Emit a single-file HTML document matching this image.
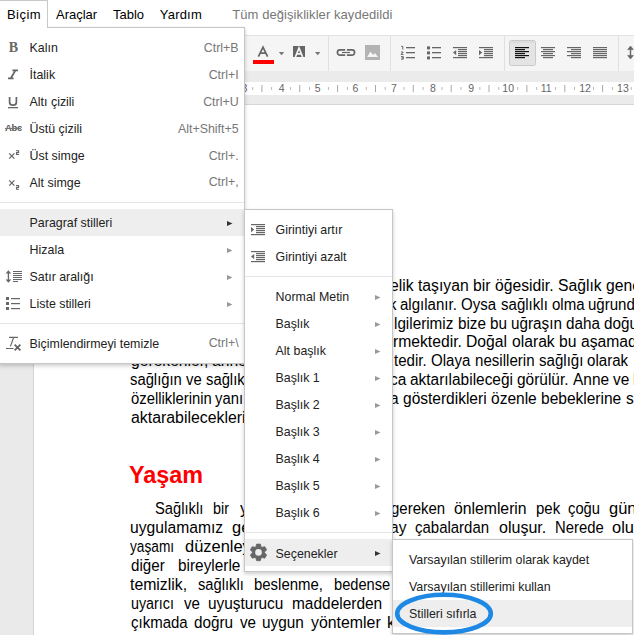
<!DOCTYPE html>
<html><head><meta charset="utf-8">
<style>
*{margin:0;padding:0;box-sizing:border-box}
html,body{width:634px;height:635px;overflow:hidden;background:#fff;position:relative;font-family:"Liberation Sans",sans-serif}
.a{position:absolute;white-space:nowrap}
svg{position:absolute;overflow:visible}
</style></head><body>
<div class="a" style="left:56.00px;top:7.00px;font-size:13px;line-height:16px;color:#000;font-weight:normal;font-family:'Liberation Sans',sans-serif;">Araçlar</div>
<div class="a" style="left:113.00px;top:7.00px;font-size:13px;line-height:16px;color:#000;font-weight:normal;font-family:'Liberation Sans',sans-serif;">Tablo</div>
<div class="a" style="left:159.80px;top:7.00px;font-size:13px;line-height:16px;color:#000;font-weight:normal;font-family:'Liberation Sans',sans-serif;letter-spacing:0.2px">Yardım</div>
<div class="a" style="left:232.30px;top:7.00px;font-size:13px;line-height:16px;color:#777;font-weight:normal;font-family:'Liberation Sans',sans-serif;letter-spacing:0.07px">Tüm değişiklikler kaydedildi</div>
<div class="a" style="left:0px;top:35px;width:634px;height:1px;background:#e2e2e2;"></div>
<div class="a" style="left:0px;top:36px;width:634px;height:35px;background:#f5f5f5;"></div>
<div class="a" style="left:0px;top:71px;width:634px;height:11px;background:#ebebeb;"></div>
<div class="a" style="left:0px;top:82px;width:634px;height:13px;background:#fff;"></div>
<div class="a" style="left:0px;top:95px;width:634px;height:9px;background:#ebebeb;"></div>
<div class="a" style="left:0px;top:104px;width:634px;height:1px;background:#d6d6d6;"></div>
<div class="a" style="left:0px;top:105px;width:33px;height:530px;background:#eaeaea;"></div>
<div class="a" style="left:33px;top:105px;width:1px;height:530px;background:#d4d4d4;"></div>
<div class="a" style="left:328px;top:36px;width:1px;height:35px;background:#e0e0e0;"></div>
<div class="a" style="left:390px;top:36px;width:1px;height:35px;background:#e0e0e0;"></div>
<div class="a" style="left:504px;top:36px;width:1px;height:35px;background:#e0e0e0;"></div>
<div class="a" style="left:618px;top:36px;width:1px;height:35px;background:#e0e0e0;"></div>
<svg style="left:0;top:0;" width="634" height="635"><path d="M258.4 56.6 L263 47.2 L267.6 56.6 M260.2 53.2 H265.8" stroke="#666" stroke-width="1.7" fill="none"/><rect x="253" y="60" width="21" height="4" fill="#ff0000"/><path d="M278.8 52 H284.2 L281.5 55.2 Z" fill="#777"/><path d="M315 52 H320.4 L317.7 55.2 Z" fill="#777"/><rect x="293" y="46" width="12" height="11" fill="#666"/><path d="M295.4 57 L299 48 L302.6 57 M296.8 53.8 H301.2" stroke="#f5f5f5" stroke-width="1.7" fill="none"/><path d="M345.2 49.85 H340 A2.6 2.6 0 0 0 340 55.05 H345.2 M346.9 49.85 H352 A2.6 2.6 0 0 1 352 55.05 H346.9" stroke="#666" stroke-width="1.7" fill="none"/><rect x="342" y="51.9" width="8" height="1.2" fill="#666"/><rect x="365" y="45" width="15" height="15" fill="#b3b3b3"/><path d="M367 57 L370.5 51.8 L373.2 55 L375 53 L378 57 Z" fill="#f5f5f5"/><rect x="406" y="47" width="9" height="1.3" fill="#666"/><rect x="406" y="52" width="9" height="1.3" fill="#666"/><rect x="406" y="57" width="9" height="1.3" fill="#666"/><path d="M401.2 46.4 H402.8 V49.6 M401 52 H403.3 L401 54.4 H403.5 M401 56.6 H403.3 V59.2 H401 M401.5 57.8 H403.3" stroke="#666" stroke-width="1" fill="none"/><rect x="427" y="46.4" width="3" height="3" fill="#666"/><rect x="432" y="47" width="9" height="1.3" fill="#666"/><rect x="427" y="51.4" width="3" height="3" fill="#666"/><rect x="432" y="52" width="9" height="1.3" fill="#666"/><rect x="427" y="56.4" width="3" height="3" fill="#666"/><rect x="432" y="57" width="9" height="1.3" fill="#666"/><rect x="453" y="47" width="14" height="1.2" fill="#666"/><rect x="458" y="49" width="9" height="1.2" fill="#666"/><rect x="458" y="51" width="9" height="1.2" fill="#666"/><rect x="458" y="53" width="9" height="1.2" fill="#666"/><rect x="458" y="55" width="9" height="1.2" fill="#666"/><rect x="453" y="57" width="14" height="1.2" fill="#666"/><path d="M456.2 50 L453 52.6 L456.2 55.2 Z" fill="#666"/><rect x="479" y="47" width="14" height="1.2" fill="#666"/><rect x="484" y="49" width="9" height="1.2" fill="#666"/><rect x="484" y="51" width="9" height="1.2" fill="#666"/><rect x="484" y="53" width="9" height="1.2" fill="#666"/><rect x="484" y="55" width="9" height="1.2" fill="#666"/><rect x="479" y="57" width="14" height="1.2" fill="#666"/><path d="M479 50 L482.2 52.6 L479 55.2 Z" fill="#666"/><rect x="509.5" y="40.5" width="26" height="25" rx="2" fill="#e4e4e4" stroke="#cacaca" stroke-width="1"/><rect x="510" y="41" width="25" height="2" fill="#dcdcdc"/><rect x="515" y="47" width="14" height="1.2" fill="#111"/><rect x="515" y="49" width="10" height="1.2" fill="#111"/><rect x="515" y="51" width="14" height="1.2" fill="#111"/><rect x="515" y="53" width="10" height="1.2" fill="#111"/><rect x="515" y="55" width="14" height="1.2" fill="#111"/><rect x="515" y="57" width="10" height="1.2" fill="#111"/><rect x="541.0" y="47" width="14" height="1.2" fill="#666"/><rect x="543.0" y="49" width="10" height="1.2" fill="#666"/><rect x="541.0" y="51" width="14" height="1.2" fill="#666"/><rect x="543.0" y="53" width="10" height="1.2" fill="#666"/><rect x="541.0" y="55" width="14" height="1.2" fill="#666"/><rect x="543.0" y="57" width="10" height="1.2" fill="#666"/><rect x="567" y="47" width="14" height="1.2" fill="#666"/><rect x="571" y="49" width="10" height="1.2" fill="#666"/><rect x="567" y="51" width="14" height="1.2" fill="#666"/><rect x="571" y="53" width="10" height="1.2" fill="#666"/><rect x="567" y="55" width="14" height="1.2" fill="#666"/><rect x="571" y="57" width="10" height="1.2" fill="#666"/><rect x="593" y="47" width="14" height="1.2" fill="#666"/><rect x="593" y="49" width="14" height="1.2" fill="#666"/><rect x="593" y="51" width="14" height="1.2" fill="#666"/><rect x="593" y="53" width="14" height="1.2" fill="#666"/><rect x="593" y="55" width="14" height="1.2" fill="#666"/><rect x="593" y="57" width="14" height="1.2" fill="#666"/><path d="M630.5 48 V57" stroke="#666" stroke-width="1.4"/><path d="M627.6 49.6 L630.5 46 L633.4 49.6 Z M627.6 55.4 L630.5 59 L633.4 55.4 Z" fill="#666" stroke="#666" stroke-width="0.6"/></svg>
<svg style="left:0;top:0;" width="634" height="635"><text x="244.4" y="92" font-size="10.5" fill="#666" text-anchor="middle" font-family="Liberation Sans">3</text><rect x="261.4" y="85" width="1" height="7" fill="#a8a8a8"/><text x="281.6" y="92" font-size="10.5" fill="#666" text-anchor="middle" font-family="Liberation Sans">4</text><rect x="299.2" y="85" width="1" height="7" fill="#a8a8a8"/><text x="317.7" y="92" font-size="10.5" fill="#666" text-anchor="middle" font-family="Liberation Sans">5</text><rect x="337.1" y="85" width="1" height="7" fill="#a8a8a8"/><text x="355.5" y="92" font-size="10.5" fill="#666" text-anchor="middle" font-family="Liberation Sans">6</text><rect x="375.0" y="85" width="1" height="7" fill="#a8a8a8"/><text x="393.8" y="92" font-size="10.5" fill="#666" text-anchor="middle" font-family="Liberation Sans">7</text><rect x="412.8" y="85" width="1" height="7" fill="#a8a8a8"/><text x="433.0" y="92" font-size="10.5" fill="#666" text-anchor="middle" font-family="Liberation Sans">8</text><rect x="450.7" y="85" width="1" height="7" fill="#a8a8a8"/><text x="471.2" y="92" font-size="10.5" fill="#666" text-anchor="middle" font-family="Liberation Sans">9</text><rect x="488.5" y="85" width="1" height="7" fill="#a8a8a8"/><text x="508.2" y="92" font-size="10.5" fill="#666" text-anchor="middle" font-family="Liberation Sans">10</text><rect x="526.4" y="85" width="1" height="7" fill="#a8a8a8"/><text x="546.1" y="92" font-size="10.5" fill="#666" text-anchor="middle" font-family="Liberation Sans">11</text><rect x="564.3" y="85" width="1" height="7" fill="#a8a8a8"/><text x="585.0" y="92" font-size="10.5" fill="#666" text-anchor="middle" font-family="Liberation Sans">12</text><rect x="602.1" y="85" width="1" height="7" fill="#a8a8a8"/><text x="622.9" y="92" font-size="10.5" fill="#666" text-anchor="middle" font-family="Liberation Sans">13</text><rect x="640.0" y="85" width="1" height="7" fill="#a8a8a8"/><text x="661.0" y="92" font-size="10.5" fill="#666" text-anchor="middle" font-family="Liberation Sans">14</text><rect x="677.8" y="85" width="1" height="7" fill="#a8a8a8"/><rect x="157.6" y="87" width="1" height="3" fill="#b8b8b8"/><rect x="176.5" y="87" width="1" height="3" fill="#b8b8b8"/><rect x="195.4" y="87" width="1" height="3" fill="#b8b8b8"/><rect x="214.3" y="87" width="1" height="3" fill="#b8b8b8"/><rect x="233.3" y="87" width="1" height="3" fill="#b8b8b8"/><rect x="252.2" y="87" width="1" height="3" fill="#b8b8b8"/><rect x="271.1" y="87" width="1" height="3" fill="#b8b8b8"/><rect x="290.1" y="87" width="1" height="3" fill="#b8b8b8"/><rect x="309.0" y="87" width="1" height="3" fill="#b8b8b8"/><rect x="327.9" y="87" width="1" height="3" fill="#b8b8b8"/><rect x="346.9" y="87" width="1" height="3" fill="#b8b8b8"/><rect x="365.8" y="87" width="1" height="3" fill="#b8b8b8"/><rect x="384.7" y="87" width="1" height="3" fill="#b8b8b8"/><rect x="403.6" y="87" width="1" height="3" fill="#b8b8b8"/><rect x="422.6" y="87" width="1" height="3" fill="#b8b8b8"/><rect x="441.5" y="87" width="1" height="3" fill="#b8b8b8"/><rect x="460.4" y="87" width="1" height="3" fill="#b8b8b8"/><rect x="479.4" y="87" width="1" height="3" fill="#b8b8b8"/><rect x="498.3" y="87" width="1" height="3" fill="#b8b8b8"/><rect x="517.2" y="87" width="1" height="3" fill="#b8b8b8"/><rect x="536.2" y="87" width="1" height="3" fill="#b8b8b8"/><rect x="555.1" y="87" width="1" height="3" fill="#b8b8b8"/><rect x="574.0" y="87" width="1" height="3" fill="#b8b8b8"/><rect x="593.0" y="87" width="1" height="3" fill="#b8b8b8"/><rect x="611.9" y="87" width="1" height="3" fill="#b8b8b8"/><rect x="630.8" y="87" width="1" height="3" fill="#b8b8b8"/><rect x="649.7" y="87" width="1" height="3" fill="#b8b8b8"/><rect x="668.7" y="87" width="1" height="3" fill="#b8b8b8"/><rect x="687.6" y="87" width="1" height="3" fill="#b8b8b8"/><rect x="706.5" y="87" width="1" height="3" fill="#b8b8b8"/><rect x="725.5" y="87" width="1" height="3" fill="#b8b8b8"/><rect x="744.4" y="87" width="1" height="3" fill="#b8b8b8"/><rect x="763.3" y="87" width="1" height="3" fill="#b8b8b8"/><rect x="782.2" y="87" width="1" height="3" fill="#b8b8b8"/><rect x="801.2" y="87" width="1" height="3" fill="#b8b8b8"/><rect x="820.1" y="87" width="1" height="3" fill="#b8b8b8"/><rect x="839.0" y="87" width="1" height="3" fill="#b8b8b8"/><rect x="858.0" y="87" width="1" height="3" fill="#b8b8b8"/></svg>
<div class="a" style="left:390.06px;top:275.76px;font-size:16px;line-height:19px;color:#000;font-weight:normal;font-family:'Liberation Sans',sans-serif;transform:scaleX(0.9816);transform-origin:0 0">elik</div>
<div class="a" style="left:418.02px;top:275.76px;font-size:16px;line-height:19px;color:#000;font-weight:normal;font-family:'Liberation Sans',sans-serif;transform:scaleX(0.9816);transform-origin:0 0">taşıyan</div>
<div class="a" style="left:473.06px;top:275.76px;font-size:16px;line-height:19px;color:#000;font-weight:normal;font-family:'Liberation Sans',sans-serif;transform:scaleX(0.9816);transform-origin:0 0">bir</div>
<div class="a" style="left:494.90px;top:275.76px;font-size:16px;line-height:19px;color:#000;font-weight:normal;font-family:'Liberation Sans',sans-serif;transform:scaleX(0.9816);transform-origin:0 0">öğesidir.</div>
<div class="a" style="left:557.83px;top:275.76px;font-size:16px;line-height:19px;color:#000;font-weight:normal;font-family:'Liberation Sans',sans-serif;transform:scaleX(0.9816);transform-origin:0 0">Sağlık</div>
<div class="a" style="left:605.88px;top:275.76px;font-size:16px;line-height:19px;color:#000;font-weight:normal;font-family:'Liberation Sans',sans-serif;transform:scaleX(0.9816);transform-origin:0 0">genel</div>
<div class="a" style="left:388.51px;top:294.63px;font-size:16px;line-height:19px;color:#000;font-weight:normal;font-family:'Liberation Sans',sans-serif;transform:scaleX(0.9399);transform-origin:0 0">k</div>
<div class="a" style="left:400.22px;top:294.63px;font-size:16px;line-height:19px;color:#000;font-weight:normal;font-family:'Liberation Sans',sans-serif;transform:scaleX(0.9399);transform-origin:0 0">algılanır.</div>
<div class="a" style="left:461.33px;top:294.63px;font-size:16px;line-height:19px;color:#000;font-weight:normal;font-family:'Liberation Sans',sans-serif;transform:scaleX(0.9399);transform-origin:0 0">Oysa</div>
<div class="a" style="left:500.63px;top:294.63px;font-size:16px;line-height:19px;color:#000;font-weight:normal;font-family:'Liberation Sans',sans-serif;transform:scaleX(0.9399);transform-origin:0 0">sağlıklı</div>
<div class="a" style="left:551.66px;top:294.63px;font-size:16px;line-height:19px;color:#000;font-weight:normal;font-family:'Liberation Sans',sans-serif;transform:scaleX(0.9399);transform-origin:0 0">olma</div>
<div class="a" style="left:588.47px;top:294.63px;font-size:16px;line-height:19px;color:#000;font-weight:normal;font-family:'Liberation Sans',sans-serif;transform:scaleX(0.9399);transform-origin:0 0">uğrunda</div>
<div class="a" style="left:393.88px;top:313.50px;font-size:16px;line-height:19px;color:#000;font-weight:normal;font-family:'Liberation Sans',sans-serif;transform:scaleX(0.9534);transform-origin:0 0">lgilerimiz</div>
<div class="a" style="left:457.50px;top:313.50px;font-size:16px;line-height:19px;color:#000;font-weight:normal;font-family:'Liberation Sans',sans-serif;transform:scaleX(0.9534);transform-origin:0 0">bize</div>
<div class="a" style="left:489.75px;top:313.50px;font-size:16px;line-height:19px;color:#000;font-weight:normal;font-family:'Liberation Sans',sans-serif;transform:scaleX(0.9534);transform-origin:0 0">bu</div>
<div class="a" style="left:510.98px;top:313.50px;font-size:16px;line-height:19px;color:#000;font-weight:normal;font-family:'Liberation Sans',sans-serif;transform:scaleX(0.9534);transform-origin:0 0">uğraşın</div>
<div class="a" style="left:566.14px;top:313.50px;font-size:16px;line-height:19px;color:#000;font-weight:normal;font-family:'Liberation Sans',sans-serif;transform:scaleX(0.9534);transform-origin:0 0">daha</div>
<div class="a" style="left:604.35px;top:313.50px;font-size:16px;line-height:19px;color:#000;font-weight:normal;font-family:'Liberation Sans',sans-serif;transform:scaleX(0.9534);transform-origin:0 0">doğu</div>
<div class="a" style="left:392.96px;top:332.37px;font-size:16px;line-height:19px;color:#000;font-weight:normal;font-family:'Liberation Sans',sans-serif;transform:scaleX(0.9802);transform-origin:0 0">rmektedir.</div>
<div class="a" style="left:466.23px;top:332.37px;font-size:16px;line-height:19px;color:#000;font-weight:normal;font-family:'Liberation Sans',sans-serif;transform:scaleX(0.9802);transform-origin:0 0">Doğal</div>
<div class="a" style="left:511.61px;top:332.37px;font-size:16px;line-height:19px;color:#000;font-weight:normal;font-family:'Liberation Sans',sans-serif;transform:scaleX(0.9802);transform-origin:0 0">olarak</div>
<div class="a" style="left:558.72px;top:332.37px;font-size:16px;line-height:19px;color:#000;font-weight:normal;font-family:'Liberation Sans',sans-serif;transform:scaleX(0.9802);transform-origin:0 0">bu</div>
<div class="a" style="left:580.54px;top:332.37px;font-size:16px;line-height:19px;color:#000;font-weight:normal;font-family:'Liberation Sans',sans-serif;transform:scaleX(0.9802);transform-origin:0 0">aşamada</div>
<div class="a" style="left:394.34px;top:351.24px;font-size:16px;line-height:19px;color:#000;font-weight:normal;font-family:'Liberation Sans',sans-serif;transform:scaleX(0.9428);transform-origin:0 0">tedir.</div>
<div class="a" style="left:431.29px;top:351.24px;font-size:16px;line-height:19px;color:#000;font-weight:normal;font-family:'Liberation Sans',sans-serif;transform:scaleX(0.9428);transform-origin:0 0">Olaya</div>
<div class="a" style="left:474.92px;top:351.24px;font-size:16px;line-height:19px;color:#000;font-weight:normal;font-family:'Liberation Sans',sans-serif;transform:scaleX(0.9428);transform-origin:0 0">nesillerin</div>
<div class="a" style="left:538.70px;top:351.24px;font-size:16px;line-height:19px;color:#000;font-weight:normal;font-family:'Liberation Sans',sans-serif;transform:scaleX(0.9428);transform-origin:0 0">sağlığı</div>
<div class="a" style="left:587.39px;top:351.24px;font-size:16px;line-height:19px;color:#000;font-weight:normal;font-family:'Liberation Sans',sans-serif;transform:scaleX(0.9428);transform-origin:0 0">olarak</div>
<div class="a" style="left:389.50px;top:370.11px;font-size:16px;line-height:19px;color:#000;font-weight:normal;font-family:'Liberation Sans',sans-serif;transform:scaleX(0.9648);transform-origin:0 0">ca</div>
<div class="a" style="left:410.11px;top:370.11px;font-size:16px;line-height:19px;color:#000;font-weight:normal;font-family:'Liberation Sans',sans-serif;transform:scaleX(0.9648);transform-origin:0 0">aktarılabileceği</div>
<div class="a" style="left:517.48px;top:370.11px;font-size:16px;line-height:19px;color:#000;font-weight:normal;font-family:'Liberation Sans',sans-serif;transform:scaleX(0.9648);transform-origin:0 0">görülür.</div>
<div class="a" style="left:573.32px;top:370.11px;font-size:16px;line-height:19px;color:#000;font-weight:normal;font-family:'Liberation Sans',sans-serif;transform:scaleX(0.9648);transform-origin:0 0">Anne</div>
<div class="a" style="left:612.85px;top:370.11px;font-size:16px;line-height:19px;color:#000;font-weight:normal;font-family:'Liberation Sans',sans-serif;transform:scaleX(0.9648);transform-origin:0 0">ve</div>
<div class="a" style="left:633.45px;top:370.11px;font-size:16px;line-height:19px;color:#000;font-weight:normal;font-family:'Liberation Sans',sans-serif;transform:scaleX(0.9648);transform-origin:0 0">bebek</div>
<div class="a" style="left:390.41px;top:388.98px;font-size:16px;line-height:19px;color:#000;font-weight:normal;font-family:'Liberation Sans',sans-serif;transform:scaleX(0.9693);transform-origin:0 0">a</div>
<div class="a" style="left:403.36px;top:388.98px;font-size:16px;line-height:19px;color:#000;font-weight:normal;font-family:'Liberation Sans',sans-serif;transform:scaleX(0.9693);transform-origin:0 0">gösterdikleri</div>
<div class="a" style="left:491.35px;top:388.98px;font-size:16px;line-height:19px;color:#000;font-weight:normal;font-family:'Liberation Sans',sans-serif;transform:scaleX(0.9693);transform-origin:0 0">özenle</div>
<div class="a" style="left:541.41px;top:388.98px;font-size:16px;line-height:19px;color:#000;font-weight:normal;font-family:'Liberation Sans',sans-serif;transform:scaleX(0.9693);transform-origin:0 0">bebeklerine</div>
<div class="a" style="left:625.98px;top:388.98px;font-size:16px;line-height:19px;color:#000;font-weight:normal;font-family:'Liberation Sans',sans-serif;transform:scaleX(0.9693);transform-origin:0 0">s</div>
<div class="a" style="left:130.50px;top:351.24px;font-size:16px;line-height:19px;color:#000;font-weight:normal;font-family:'Liberation Sans',sans-serif;transform:scaleX(0.9786);transform-origin:0 0">gerekenler,</div>
<div class="a" style="left:212.40px;top:351.24px;font-size:16px;line-height:19px;color:#000;font-weight:normal;font-family:'Liberation Sans',sans-serif;transform:scaleX(0.9786);transform-origin:0 0">anne</div>
<div class="a" style="left:251.62px;top:351.24px;font-size:16px;line-height:19px;color:#000;font-weight:normal;font-family:'Liberation Sans',sans-serif;transform:scaleX(0.9786);transform-origin:0 0">ve</div>
<div class="a" style="left:130.33px;top:370.11px;font-size:16px;line-height:19px;color:#000;font-weight:normal;font-family:'Liberation Sans',sans-serif;transform:scaleX(0.9253);transform-origin:0 0">sağlığın</div>
<div class="a" style="left:186.35px;top:370.11px;font-size:16px;line-height:19px;color:#000;font-weight:normal;font-family:'Liberation Sans',sans-serif;transform:scaleX(0.9253);transform-origin:0 0">ve</div>
<div class="a" style="left:206.12px;top:370.11px;font-size:16px;line-height:19px;color:#000;font-weight:normal;font-family:'Liberation Sans',sans-serif;transform:scaleX(0.9253);transform-origin:0 0">sağlık</div>
<div class="a" style="left:130.50px;top:388.98px;font-size:16px;line-height:19px;color:#000;font-weight:normal;font-family:'Liberation Sans',sans-serif;transform:scaleX(0.9260);transform-origin:0 0">özelliklerinin</div>
<div class="a" style="left:215.40px;top:388.98px;font-size:16px;line-height:19px;color:#000;font-weight:normal;font-family:'Liberation Sans',sans-serif;transform:scaleX(0.9260);transform-origin:0 0">yanı</div>
<div class="a" style="left:130.50px;top:407.85px;font-size:16px;line-height:19px;color:#000;font-weight:normal;font-family:'Liberation Sans',sans-serif;transform:scaleX(0.9916);transform-origin:0 0">aktarabilecekleri</div>
<div class="a" style="left:129.00px;top:460.59px;font-size:23.4px;line-height:28px;color:#ff0000;font-weight:bold;font-family:'Liberation Sans',sans-serif;">Yaşam</div>
<div class="a" style="left:154.60px;top:498.98px;font-size:16.8px;line-height:19px;color:#000;font-weight:normal;font-family:'Liberation Sans',sans-serif;transform:scaleX(0.8766);transform-origin:0 0">Sağlıklı</div>
<div class="a" style="left:212.90px;top:498.98px;font-size:16.8px;line-height:19px;color:#000;font-weight:normal;font-family:'Liberation Sans',sans-serif;transform:scaleX(0.8556);transform-origin:0 0">bir</div>
<div class="a" style="left:239.50px;top:498.98px;font-size:16.8px;line-height:19px;color:#000;font-weight:normal;font-family:'Liberation Sans',sans-serif;transform:scaleX(0.9800);transform-origin:0 0">yaşam</div>
<div class="a" style="left:390.50px;top:498.98px;font-size:16.8px;line-height:19px;color:#000;font-weight:normal;font-family:'Liberation Sans',sans-serif;transform:scaleX(0.8929);transform-origin:0 0">gereken</div>
<div class="a" style="left:453.90px;top:498.98px;font-size:16.8px;line-height:19px;color:#000;font-weight:normal;font-family:'Liberation Sans',sans-serif;transform:scaleX(0.9381);transform-origin:0 0">önlemlerin</div>
<div class="a" style="left:536.00px;top:498.98px;font-size:16.8px;line-height:19px;color:#000;font-weight:normal;font-family:'Liberation Sans',sans-serif;transform:scaleX(0.8934);transform-origin:0 0">pek</div>
<div class="a" style="left:568.00px;top:498.98px;font-size:16.8px;line-height:19px;color:#000;font-weight:normal;font-family:'Liberation Sans',sans-serif;transform:scaleX(0.8791);transform-origin:0 0">çoğu</div>
<div class="a" style="left:608.50px;top:498.98px;font-size:16.8px;line-height:19px;color:#000;font-weight:normal;font-family:'Liberation Sans',sans-serif;transform:scaleX(0.9800);transform-origin:0 0">günlük</div>
<div class="a" style="left:130.40px;top:517.93px;font-size:16.8px;line-height:19px;color:#000;font-weight:normal;font-family:'Liberation Sans',sans-serif;transform:scaleX(0.9329);transform-origin:0 0">uygulamamız</div>
<div class="a" style="left:232.40px;top:517.93px;font-size:16.8px;line-height:19px;color:#000;font-weight:normal;font-family:'Liberation Sans',sans-serif;transform:scaleX(0.9800);transform-origin:0 0">gereken</div>
<div class="a" style="left:389.50px;top:517.93px;font-size:16.8px;line-height:19px;color:#000;font-weight:normal;font-family:'Liberation Sans',sans-serif;transform:scaleX(0.9266);transform-origin:0 0">ay</div>
<div class="a" style="left:414.50px;top:517.93px;font-size:16.8px;line-height:19px;color:#000;font-weight:normal;font-family:'Liberation Sans',sans-serif;transform:scaleX(0.8917);transform-origin:0 0">çabalardan</div>
<div class="a" style="left:498.60px;top:517.93px;font-size:16.8px;line-height:19px;color:#000;font-weight:normal;font-family:'Liberation Sans',sans-serif;transform:scaleX(0.9556);transform-origin:0 0">oluşur.</div>
<div class="a" style="left:554.70px;top:517.93px;font-size:16.8px;line-height:19px;color:#000;font-weight:normal;font-family:'Liberation Sans',sans-serif;transform:scaleX(0.8838);transform-origin:0 0">Nerede</div>
<div class="a" style="left:611.50px;top:517.93px;font-size:16.8px;line-height:19px;color:#000;font-weight:normal;font-family:'Liberation Sans',sans-serif;transform:scaleX(0.9800);transform-origin:0 0">olursa</div>
<div class="a" style="left:130.40px;top:536.88px;font-size:16.8px;line-height:19px;color:#000;font-weight:normal;font-family:'Liberation Sans',sans-serif;transform:scaleX(0.8155);transform-origin:0 0">yaşamı</div>
<div class="a" style="left:184.50px;top:536.88px;font-size:16.8px;line-height:19px;color:#000;font-weight:normal;font-family:'Liberation Sans',sans-serif;transform:scaleX(0.9800);transform-origin:0 0">düzenleyen</div>
<div class="a" style="left:130.80px;top:555.83px;font-size:16.8px;line-height:19px;color:#000;font-weight:normal;font-family:'Liberation Sans',sans-serif;transform:scaleX(0.9037);transform-origin:0 0">diğer</div>
<div class="a" style="left:177.60px;top:555.83px;font-size:16.8px;line-height:19px;color:#000;font-weight:normal;font-family:'Liberation Sans',sans-serif;transform:scaleX(0.9164);transform-origin:0 0">bireylerle</div>
<div class="a" style="left:130.40px;top:574.78px;font-size:16.8px;line-height:19px;color:#000;font-weight:normal;font-family:'Liberation Sans',sans-serif;transform:scaleX(0.9423);transform-origin:0 0">temizlik,</div>
<div class="a" style="left:197.50px;top:574.78px;font-size:16.8px;line-height:19px;color:#000;font-weight:normal;font-family:'Liberation Sans',sans-serif;transform:scaleX(0.8757);transform-origin:0 0">sağlıklı</div>
<div class="a" style="left:254.40px;top:574.78px;font-size:16.8px;line-height:19px;color:#000;font-weight:normal;font-family:'Liberation Sans',sans-serif;transform:scaleX(0.8903);transform-origin:0 0">beslenme,</div>
<div class="a" style="left:333.60px;top:574.78px;font-size:16.8px;line-height:19px;color:#000;font-weight:normal;font-family:'Liberation Sans',sans-serif;transform:scaleX(0.8729);transform-origin:0 0">bedense</div>
<div class="a" style="left:130.80px;top:593.73px;font-size:16.8px;line-height:19px;color:#000;font-weight:normal;font-family:'Liberation Sans',sans-serif;transform:scaleX(0.8532);transform-origin:0 0">uyarıcı</div>
<div class="a" style="left:183.80px;top:593.73px;font-size:16.8px;line-height:19px;color:#000;font-weight:normal;font-family:'Liberation Sans',sans-serif;transform:scaleX(0.8983);transform-origin:0 0">ve</div>
<div class="a" style="left:207.50px;top:593.73px;font-size:16.8px;line-height:19px;color:#000;font-weight:normal;font-family:'Liberation Sans',sans-serif;transform:scaleX(0.9185);transform-origin:0 0">uyuşturucu</div>
<div class="a" style="left:292.40px;top:593.73px;font-size:16.8px;line-height:19px;color:#000;font-weight:normal;font-family:'Liberation Sans',sans-serif;transform:scaleX(0.9205);transform-origin:0 0">maddelerden</div>
<div class="a" style="left:130.80px;top:612.68px;font-size:16.8px;line-height:19px;color:#000;font-weight:normal;font-family:'Liberation Sans',sans-serif;transform:scaleX(0.8931);transform-origin:0 0">çıkmada</div>
<div class="a" style="left:194.20px;top:612.68px;font-size:16.8px;line-height:19px;color:#000;font-weight:normal;font-family:'Liberation Sans',sans-serif;transform:scaleX(0.9116);transform-origin:0 0">doğru</div>
<div class="a" style="left:239.50px;top:612.68px;font-size:16.8px;line-height:19px;color:#000;font-weight:normal;font-family:'Liberation Sans',sans-serif;transform:scaleX(0.9040);transform-origin:0 0">ve</div>
<div class="a" style="left:262.10px;top:612.68px;font-size:16.8px;line-height:19px;color:#000;font-weight:normal;font-family:'Liberation Sans',sans-serif;transform:scaleX(0.9148);transform-origin:0 0">uygun</div>
<div class="a" style="left:310.70px;top:612.68px;font-size:16.8px;line-height:19px;color:#000;font-weight:normal;font-family:'Liberation Sans',sans-serif;transform:scaleX(0.9458);transform-origin:0 0">yöntemler</div>
<div class="a" style="left:387.10px;top:612.68px;font-size:16.8px;line-height:19px;color:#000;font-weight:normal;font-family:'Liberation Sans',sans-serif;transform:scaleX(0.9800);transform-origin:0 0">kaçınmak</div>
<div class="a" style="left:-1px;top:27px;width:246px;height:337px;background:#fff;border:1px solid #c6c6c6;box-shadow:0 2px 4px rgba(0,0,0,0.2)"></div>
<div class="a" style="left:0px;top:209px;width:244px;height:27px;background:#eeeeee;"></div>
<div class="a" style="left:0px;top:202px;width:244px;height:1px;background:#e5e5e5;"></div>
<div class="a" style="left:0px;top:323px;width:244px;height:1px;background:#e5e5e5;"></div>
<div class="a" style="left:29.60px;top:40.00px;font-size:12.4px;line-height:16px;color:#222;font-weight:normal;font-family:'Liberation Sans',sans-serif;">Kalın</div>
<div class="a" style="right:395.4px;top:40.50px;font-size:12.4px;line-height:15px;color:#777">Ctrl+B</div>
<div class="a" style="left:29.60px;top:67.00px;font-size:12.4px;line-height:16px;color:#222;font-weight:normal;font-family:'Liberation Sans',sans-serif;">İtalik</div>
<div class="a" style="right:395.4px;top:67.50px;font-size:12.4px;line-height:15px;color:#777">Ctrl+I</div>
<div class="a" style="left:29.60px;top:94.00px;font-size:12.4px;line-height:16px;color:#222;font-weight:normal;font-family:'Liberation Sans',sans-serif;">Altı çizili</div>
<div class="a" style="right:395.4px;top:94.50px;font-size:12.4px;line-height:15px;color:#777">Ctrl+U</div>
<div class="a" style="left:29.60px;top:121.00px;font-size:12.4px;line-height:16px;color:#222;font-weight:normal;font-family:'Liberation Sans',sans-serif;">Üstü çizili</div>
<div class="a" style="right:395.4px;top:121.50px;font-size:12.4px;line-height:15px;color:#777">Alt+Shift+5</div>
<div class="a" style="left:29.60px;top:148.00px;font-size:12.4px;line-height:16px;color:#222;font-weight:normal;font-family:'Liberation Sans',sans-serif;">Üst simge</div>
<div class="a" style="right:395.4px;top:148.50px;font-size:12.4px;line-height:15px;color:#777">Ctrl+.</div>
<div class="a" style="left:29.60px;top:174.90px;font-size:12.4px;line-height:16px;color:#222;font-weight:normal;font-family:'Liberation Sans',sans-serif;">Alt simge</div>
<div class="a" style="right:395.4px;top:175.40px;font-size:12.4px;line-height:15px;color:#777">Ctrl+,</div>
<div class="a" style="left:29.60px;top:214.70px;font-size:12.4px;line-height:16px;color:#222;font-weight:normal;font-family:'Liberation Sans',sans-serif;">Paragraf stilleri</div>
<div class="a" style="left:29.60px;top:241.70px;font-size:12.4px;line-height:16px;color:#222;font-weight:normal;font-family:'Liberation Sans',sans-serif;">Hizala</div>
<div class="a" style="left:29.60px;top:268.70px;font-size:12.4px;line-height:16px;color:#222;font-weight:normal;font-family:'Liberation Sans',sans-serif;">Satır aralığı</div>
<div class="a" style="left:29.60px;top:295.70px;font-size:12.4px;line-height:16px;color:#222;font-weight:normal;font-family:'Liberation Sans',sans-serif;">Liste stilleri</div>
<div class="a" style="left:29.60px;top:335.70px;font-size:12.4px;line-height:16px;color:#222;font-weight:normal;font-family:'Liberation Sans',sans-serif;">Biçimlendirmeyi temizle</div>
<div class="a" style="right:395.4px;top:336.20px;font-size:12.4px;line-height:15px;color:#777">Ctrl+\</div>
<svg style="left:227px;top:221.1px" width="6" height="5"><path d="M0 0 L5.5 2.5 L0 5 Z" fill="#333"/></svg>
<svg style="left:227px;top:248.0px" width="6" height="5"><path d="M0 0 L5.5 2.5 L0 5 Z" fill="#999"/></svg>
<svg style="left:227px;top:275.0px" width="6" height="5"><path d="M0 0 L5.5 2.5 L0 5 Z" fill="#999"/></svg>
<svg style="left:227px;top:302.0px" width="6" height="5"><path d="M0 0 L5.5 2.5 L0 5 Z" fill="#999"/></svg>
<div class="a" style="left:8.70px;top:39.35px;font-size:14px;line-height:18px;color:#666;font-weight:bold;font-family:'Liberation Serif',serif;">B</div>
<svg style="left:0;top:0;" width="634" height="635"><path d="M12.4 70.3 H18 M8 78.3 H13.6 M15.5 70.3 L10.8 78.3" stroke="#666" stroke-width="1.7" fill="none"/><path d="M9.6 97 V102.2 Q9.6 105.2 13 105.2 Q16.4 105.2 16.4 102.2 V97" stroke="#666" stroke-width="1.7" fill="none"/><rect x="8" y="107" width="10" height="1.3" fill="#666"/><path d="M9.2 153.4 L14.4 158.6 M14.4 153.4 L9.2 158.6" stroke="#666" stroke-width="1.3" fill="none"/><path d="M16 150.7 H18.6 V152.6 H16.5 V154.5 H19" stroke="#666" stroke-width="1.1" fill="none"/><path d="M9.2 180.4 L14.4 185.6 M14.4 180.4 L9.2 185.6" stroke="#666" stroke-width="1.3" fill="none"/><path d="M16 185.5 H18.6 V187.4 H16.5 V189.3 H19" stroke="#666" stroke-width="1.1" fill="none"/><path d="M8.4 272 V281" stroke="#666" stroke-width="1.3"/><path d="M5.6 273.6 L8.4 270.2 L11.2 273.6 Z M5.6 279.4 L8.4 282.8 L11.2 279.4 Z" fill="#666"/><rect x="13" y="271" width="9" height="1" fill="#666"/><rect x="13" y="273" width="9" height="1" fill="#666"/><rect x="13" y="275" width="9" height="1" fill="#666"/><rect x="13" y="277" width="9" height="1" fill="#666"/><rect x="13" y="279" width="9" height="1" fill="#666"/><rect x="13" y="281" width="5" height="1" fill="#666"/><rect x="6" y="297" width="3" height="3" fill="#666"/><rect x="11" y="298" width="9" height="1.2" fill="#666"/><rect x="6" y="302" width="3" height="3" fill="#666"/><rect x="11" y="303" width="9" height="1.2" fill="#666"/><rect x="6" y="307" width="3" height="3" fill="#666"/><rect x="11" y="308" width="9" height="1.2" fill="#666"/><path d="M9 337.4 H17.9 M13.7 337.4 L10.4 346.4 M6 348.5 H13.5" stroke="#666" stroke-width="1.2" fill="none"/><path d="M14.6 344.6 L20.4 350.4 M20.4 344.6 L14.6 350.4" stroke="#666" stroke-width="1.8" fill="none"/></svg>
<div class="a" style="left:5.00px;top:121.64px;font-size:9.4px;line-height:12px;color:#555;font-weight:bold;font-family:'Liberation Sans',sans-serif;letter-spacing:-0.3px">Abc</div>
<div class="a" style="left:5px;top:128px;width:16px;height:0.9px;background:#777;"></div>
<div class="a" style="left:-1px;top:0px;width:49px;height:28px;background:#fff;border-top:1px solid #c8c8c8;border-right:1px solid #c8c8c8"></div>
<div class="a" style="left:6.90px;top:7.00px;font-size:13px;line-height:16px;color:#000;font-weight:normal;font-family:'Liberation Sans',sans-serif;letter-spacing:0.5px">Biçim</div>
<div class="a" style="left:244px;top:209px;width:149px;height:363px;background:#fff;border:1px solid #c6c6c6;box-shadow:0 2px 4px rgba(0,0,0,0.2)"></div>
<div class="a" style="left:245px;top:539px;width:147px;height:27px;background:#eeeeee;"></div>
<div class="a" style="left:245px;top:276px;width:147px;height:1px;background:#e5e5e5;"></div>
<div class="a" style="left:245px;top:532px;width:147px;height:1px;background:#e5e5e5;"></div>
<div class="a" style="left:275.60px;top:222.10px;font-size:12.4px;line-height:16px;color:#222;font-weight:normal;font-family:'Liberation Sans',sans-serif;">Girintiyi artır</div>
<div class="a" style="left:275.60px;top:249.10px;font-size:12.4px;line-height:16px;color:#222;font-weight:normal;font-family:'Liberation Sans',sans-serif;">Girintiyi azalt</div>
<div class="a" style="left:275.60px;top:289.10px;font-size:12.4px;line-height:16px;color:#222;font-weight:normal;font-family:'Liberation Sans',sans-serif;">Normal Metin</div>
<svg style="left:375px;top:295.0px" width="6" height="5"><path d="M0 0 L5.5 2.5 L0 5 Z" fill="#999"/></svg>
<div class="a" style="left:275.60px;top:316.10px;font-size:12.4px;line-height:16px;color:#222;font-weight:normal;font-family:'Liberation Sans',sans-serif;">Başlık</div>
<svg style="left:375px;top:322.0px" width="6" height="5"><path d="M0 0 L5.5 2.5 L0 5 Z" fill="#999"/></svg>
<div class="a" style="left:275.60px;top:343.10px;font-size:12.4px;line-height:16px;color:#222;font-weight:normal;font-family:'Liberation Sans',sans-serif;">Alt başlık</div>
<svg style="left:375px;top:349.0px" width="6" height="5"><path d="M0 0 L5.5 2.5 L0 5 Z" fill="#999"/></svg>
<div class="a" style="left:275.60px;top:370.10px;font-size:12.4px;line-height:16px;color:#222;font-weight:normal;font-family:'Liberation Sans',sans-serif;">Başlık 1</div>
<svg style="left:375px;top:376.0px" width="6" height="5"><path d="M0 0 L5.5 2.5 L0 5 Z" fill="#999"/></svg>
<div class="a" style="left:275.60px;top:397.10px;font-size:12.4px;line-height:16px;color:#222;font-weight:normal;font-family:'Liberation Sans',sans-serif;">Başlık 2</div>
<svg style="left:375px;top:403.0px" width="6" height="5"><path d="M0 0 L5.5 2.5 L0 5 Z" fill="#999"/></svg>
<div class="a" style="left:275.60px;top:424.10px;font-size:12.4px;line-height:16px;color:#222;font-weight:normal;font-family:'Liberation Sans',sans-serif;">Başlık 3</div>
<svg style="left:375px;top:430.0px" width="6" height="5"><path d="M0 0 L5.5 2.5 L0 5 Z" fill="#999"/></svg>
<div class="a" style="left:275.60px;top:451.10px;font-size:12.4px;line-height:16px;color:#222;font-weight:normal;font-family:'Liberation Sans',sans-serif;">Başlık 4</div>
<svg style="left:375px;top:457.0px" width="6" height="5"><path d="M0 0 L5.5 2.5 L0 5 Z" fill="#999"/></svg>
<div class="a" style="left:275.60px;top:478.10px;font-size:12.4px;line-height:16px;color:#222;font-weight:normal;font-family:'Liberation Sans',sans-serif;">Başlık 5</div>
<svg style="left:375px;top:484.0px" width="6" height="5"><path d="M0 0 L5.5 2.5 L0 5 Z" fill="#999"/></svg>
<div class="a" style="left:275.60px;top:505.10px;font-size:12.4px;line-height:16px;color:#222;font-weight:normal;font-family:'Liberation Sans',sans-serif;">Başlık 6</div>
<svg style="left:375px;top:511.0px" width="6" height="5"><path d="M0 0 L5.5 2.5 L0 5 Z" fill="#999"/></svg>
<div class="a" style="left:275.60px;top:545.50px;font-size:12.4px;line-height:16px;color:#222;font-weight:normal;font-family:'Liberation Sans',sans-serif;">Seçenekler</div>
<svg style="left:375px;top:551.0px" width="6" height="5"><path d="M0 0 L5.5 2.5 L0 5 Z" fill="#333"/></svg>
<svg style="left:0;top:0;" width="634" height="635"><rect x="251" y="224" width="14" height="1.2" fill="#666"/><rect x="256" y="226" width="9" height="1.2" fill="#666"/><rect x="256" y="228" width="9" height="1.2" fill="#666"/><rect x="256" y="230" width="9" height="1.2" fill="#666"/><rect x="256" y="232" width="9" height="1.2" fill="#666"/><rect x="251" y="234" width="14" height="1.2" fill="#666"/><path d="M251 227 L254.2 229.6 L251 232.2 Z" fill="#666"/><rect x="251" y="251" width="14" height="1.2" fill="#666"/><rect x="256" y="253" width="9" height="1.2" fill="#666"/><rect x="256" y="255" width="9" height="1.2" fill="#666"/><rect x="256" y="257" width="9" height="1.2" fill="#666"/><rect x="256" y="259" width="9" height="1.2" fill="#666"/><rect x="251" y="261" width="14" height="1.2" fill="#666"/><path d="M254.2 254 L251 256.6 L254.2 259.2 Z" fill="#666"/><path d="M255.85 546.91 L256.65 544.10 L260.35 544.10 L261.15 546.91 L261.93 547.36 L264.76 546.65 L266.61 549.86 L264.58 551.95 L264.58 552.85 L266.61 554.94 L264.76 558.15 L261.93 557.44 L261.15 557.89 L260.35 560.70 L256.65 560.70 L255.85 557.89 L255.07 557.44 L252.24 558.15 L250.39 554.94 L252.42 552.85 L252.42 551.95 L250.39 549.86 L252.24 546.65 L255.07 547.36 Z" fill="#666" stroke="#666" stroke-width="0.8" stroke-linejoin="round"/><circle cx="258.5" cy="552.4" r="3.3" fill="#eeeeee"/></svg>
<div class="a" style="left:392px;top:539px;width:241px;height:95px;background:#fff;border:1px solid #c6c6c6;box-shadow:0 2px 4px rgba(0,0,0,0.2)"></div>
<div class="a" style="left:393px;top:600px;width:239px;height:27px;background:#eeeeee;"></div>
<div class="a" style="left:409.00px;top:552.10px;font-size:12.4px;line-height:16px;color:#222;font-weight:normal;font-family:'Liberation Sans',sans-serif;">Varsayılan stillerim olarak kaydet</div>
<div class="a" style="left:409.00px;top:578.70px;font-size:12.4px;line-height:16px;color:#222;font-weight:normal;font-family:'Liberation Sans',sans-serif;">Varsayılan stillerimi kullan</div>
<div class="a" style="left:409.00px;top:605.90px;font-size:12.4px;line-height:16px;color:#222;font-weight:normal;font-family:'Liberation Sans',sans-serif;">Stilleri sıfırla</div>
<svg style="left:0;top:0" width="634" height="635"><ellipse cx="444" cy="613.6" rx="46.8" ry="18.8" fill="none" stroke="#1e88e5" stroke-width="4.6"/></svg>
<div class="a" style="left:206.50px;top:456.87px;font-size:20px;line-height:24px;color:rgba(0,0,0,0.022);font-weight:bold;font-family:'Liberation Sans',sans-serif;transform:scaleX(1.26);transform-origin:0 0">dijitalders.com</div>
</body></html>
